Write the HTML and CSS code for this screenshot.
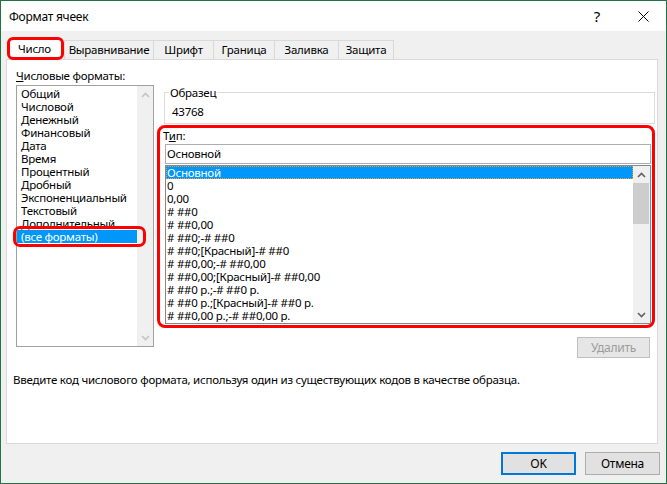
FILE: index.html
```html
<!DOCTYPE html>
<html lang="ru">
<head>
    <meta charset="UTF-8">
    <title>Формат ячеек</title>
    <link rel="stylesheet" href="styles.css">
</head>
<body>
    <div class="window">
        <div class="titlebar">
            <span class="title">Формат ячеек</span>
            <span class="help">?</span>
            <span class="close">
                <svg width="11" height="11" viewBox="0 0 11 11"><path d="M0.5 0.5 L10.5 10.5 M10.5 0.5 L0.5 10.5" stroke="#000" stroke-width="1"/></svg>
            </span>
        </div>

        <div class="body">
            <div class="tabs">
                <div class="tab active">Число</div>
                <div class="tab w-align">Выравнивание</div>
                <div class="tab w-font">Шрифт</div>
                <div class="tab w-border">Граница</div>
                <div class="tab w-fill">Заливка</div>
                <div class="tab w-protect">Защита</div>
            </div>

            <div class="panel">
                <div class="panel-main">
                    <div class="col-left">
                        <div class="label"><u>Ч</u>исловые форматы:</div>
                        <div class="listbox cat-list">
                            <div class="rows">
                                <div class="row">Общий</div>
                                <div class="row">Числовой</div>
                                <div class="row">Денежный</div>
                                <div class="row">Финансовый</div>
                                <div class="row">Дата</div>
                                <div class="row">Время</div>
                                <div class="row">Процентный</div>
                                <div class="row">Дробный</div>
                                <div class="row">Экспоненциальный</div>
                                <div class="row">Текстовый</div>
                                <div class="row">Дополнительный</div>
                                <div class="row selected">(все форматы)</div>
                            </div>
                            <div class="scrollbar disabled">
                                <div class="arrow"><svg width="9" height="6" viewBox="0 0 9 6"><polyline points="1,5 4.5,1.5 8,5" fill="none" stroke="#c4c4c4" stroke-width="1.6"/></svg></div>
                                <div class="track"></div>
                                <div class="arrow"><svg width="9" height="6" viewBox="0 0 9 6"><polyline points="1,1 4.5,4.5 8,1" fill="none" stroke="#c4c4c4" stroke-width="1.6"/></svg></div>
                            </div>
                            <div class="mark mark-all"></div>
                        </div>
                    </div>

                    <div class="col-right">
                        <fieldset class="sample">
                            <legend>Образец</legend>
                            <div class="sample-value">43768</div>
                        </fieldset>

                        <div class="type-group">
                            <div class="label">Т<u>и</u>п:</div>
                            <div class="type-input">Основной</div>
                            <div class="listbox type-list">
                                <div class="rows">
                                    <div class="row selected focused">Основной</div>
                                    <div class="row">0</div>
                                    <div class="row">0,00</div>
                                    <div class="row"># ##0</div>
                                    <div class="row"># ##0,00</div>
                                    <div class="row"># ##0;-# ##0</div>
                                    <div class="row"># ##0;[Красный]-# ##0</div>
                                    <div class="row"># ##0,00;-# ##0,00</div>
                                    <div class="row"># ##0,00;[Красный]-# ##0,00</div>
                                    <div class="row"># ##0 р.;-# ##0 р.</div>
                                    <div class="row"># ##0 р.;[Красный]-# ##0 р.</div>
                                    <div class="row"># ##0,00 р.;-# ##0,00 р.</div>
                                </div>
                                <div class="scrollbar">
                                    <div class="arrow"><svg width="9" height="6" viewBox="0 0 9 6"><polyline points="1,5 4.5,1.5 8,5" fill="none" stroke="#606060" stroke-width="1.6"/></svg></div>
                                    <div class="track"><div class="thumb"></div></div>
                                    <div class="arrow"><svg width="9" height="6" viewBox="0 0 9 6"><polyline points="1,1 4.5,4.5 8,1" fill="none" stroke="#606060" stroke-width="1.6"/></svg></div>
                                </div>
                            </div>
                        </div>

                        <div class="actions">
                            <button class="btn btn-disabled" disabled>Удалить</button>
                        </div>
                    </div>
                </div>

                <div class="hint">Введите код числового формата, используя один из существующих кодов в качестве образца.</div>
            </div>

            <div class="footer">
                <button class="btn btn-default">OK</button>
                <button class="btn">Отмена</button>
            </div>
        </div>
    </div>
</body>
</html>
```

FILE: styles.css
```css
body {
    margin: 0;
    font-family: "Noto Sans", "Segoe UI", sans-serif;
    font-size: 11.5px;
    letter-spacing: -0.25px;
    color: #000;
}
.window {
    width: 667px;
    height: 484px;
    box-sizing: border-box;
    border: 1px solid #217346;
    background: #f0f0f0;
    display: flex;
    flex-direction: column;
}
.titlebar {
    height: 30px;
    flex-shrink: 0;
    background: #fff;
    display: flex;
    align-items: center;
}
.title {
    flex: 1;
    margin-left: 8px;
    font-size: 12px;
    padding-top: 1px;
}
.help,
.close {
    width: 46px;
    text-align: center;
    font-size: 15px;
    line-height: 30px;
    height: 30px;
}
.close {
    display: flex;
    align-items: center;
    justify-content: center;
}
.body {
    flex: 1;
    padding: 6px 0 0 5px;
}

/* tabs */
.tabs {
    display: flex;
    align-items: flex-end;
    height: 22px;
    padding-left: 1px;
    position: relative;
    z-index: 1;
}
.tab {
    height: 19px;
    box-sizing: border-box;
    border: 1px solid #d9d9d9;
    border-bottom: none;
    background: #f0f0f0;
    text-align: center;
    line-height: 17px;
    margin-left: -1px;
}
.tab.active {
    width: 57px;
    height: 23px;
    margin-left: 0;
    margin-bottom: -1px;
    border: 3px solid #f00;
    border-radius: 6px;
    background: #fff;
    padding-left: 8px;
    text-align: left;
    line-height: 17px;
}
.tab.active + .tab {
    margin-left: 0;
}
.w-align { width: 90px; }
.w-font { width: 61px; }
.w-border { width: 62px; }
.w-fill { width: 65px; }
.w-protect { width: 56px; }

/* panel */
.panel {
    width: 652px;
    height: 385px;
    box-sizing: border-box;
    border: 1px solid #d9d9d9;
    background: #fff;
}
.panel-main {
    display: flex;
    padding-left: 9px;
}
.label {
    line-height: 15px;
    height: 15px;
}
.col-left {
    width: 138px;
    padding-top: 8px;
}
.col-left .label {
    margin-bottom: 2px;
}
.listbox {
    position: relative;
    display: flex;
    box-sizing: border-box;
    border: 1px solid #a0a0a0;
    background: #fff;
}
.rows {
    flex: 1;
}
.row {
    height: 13px;
    line-height: 13px;
    white-space: nowrap;
    overflow: hidden;
}
.row.selected {
    background: #0096fa;
    color: #fff;
}
.row.focused {
    outline: 1px dotted #f0a030;
    outline-offset: -1px;
}
.cat-list {
    width: 138px;
    height: 262px;
}
.cat-list .rows {
    padding-top: 1px;
}
.cat-list .row {
    padding-left: 4px;
}
.scrollbar {
    width: 16px;
    display: flex;
    flex-direction: column;
    background: #f0f0f0;
}
.arrow {
    height: 17px;
    display: flex;
    align-items: center;
    justify-content: center;
}
.track {
    flex: 1;
}
.thumb {
    height: 41px;
    margin-right: 1px;
    background: #cdcdcd;
}
.mark {
    position: absolute;
    box-sizing: border-box;
    border: 3px solid #f00;
    border-radius: 7px;
}
.mark-all {
    left: -4px;
    top: 140px;
    width: 133px;
    height: 21px;
}

.col-right {
    width: 498px;
    margin-left: 3px;
}
.sample {
    margin: 25px 0 0 7px;
    width: 491px;
    box-sizing: border-box;
    border: 1px solid #dcdcdc;
    padding: 0 4px 4px;
}
.sample legend {
    padding: 0 1px;
    line-height: 15px;
}
.sample-value {
    margin: 4px 0 0 3px;
    line-height: 15px;
}
.type-group {
    margin-top: 1px;
    border: 3px solid #f00;
    border-radius: 8px;
    padding: 0 0 1px 3px;
}
.type-input {
    margin: 1px 0 0 2px;
    width: 486px;
    height: 20px;
    box-sizing: border-box;
    border: 1px solid #abadb3;
    padding-left: 1px;
    line-height: 18px;
}
.type-list {
    margin: 1px 0 0 2px;
    width: 486px;
    height: 159px;
    border-color: #828790;
}
.type-list .row {
    padding-left: 1px;
}
.type-list .scrollbar {
    width: 17px;
}
.actions {
    display: flex;
    justify-content: flex-end;
    margin: 9px 5px 0 0;
}
.btn {
    font-family: inherit;
    font-size: 12px;
    letter-spacing: -0.25px;
    width: 75px;
    height: 23px;
    box-sizing: border-box;
    border: 1px solid #adadad;
    background: #e1e1e1;
    color: #000;
    padding: 0;
}
.btn-default {
    border: 2px solid #0078d7;
}
.btn-disabled {
    width: 73px;
    height: 21px;
    border-color: #bfbfbf;
    background: #e6e6e6;
    color: #9d9d9d;
}
.hint {
    margin-top: 14px;
    padding-left: 6px;
    line-height: 15px;
}
.footer {
    display: flex;
    justify-content: flex-end;
    gap: 9px;
    padding: 8px 6px 0 0;
}
```
